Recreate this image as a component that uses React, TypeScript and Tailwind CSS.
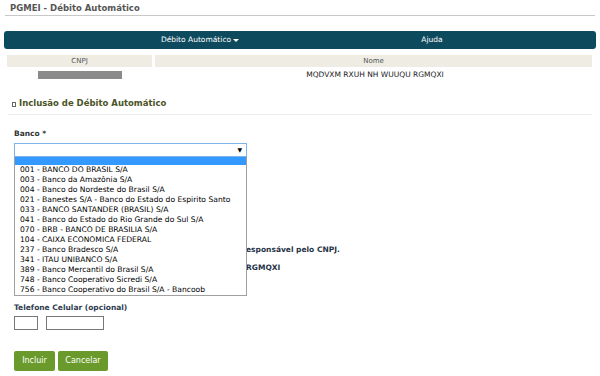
const bancos = [
  "001 - BANCO DO BRASIL S/A",
  "003 - Banco da Amazônia S/A",
  "004 - Banco do Nordeste do Brasil S/A",
  "021 - Banestes S/A - Banco do Estado do Espirito Santo",
  "033 - BANCO SANTANDER (BRASIL) S/A",
  "041 - Banco do Estado do Rio Grande do Sul S/A",
  "070 - BRB - BANCO DE BRASILIA S/A",
  "104 - CAIXA ECONOMICA FEDERAL",
  "237 - Banco Bradesco S/A",
  "341 - ITAU UNIBANCO S/A",
  "389 - Banco Mercantil do Brasil S/A",
  "748 - Banco Cooperativo Sicredi S/A",
  "756 - Banco Cooperativo do Brasil S/A - Bancoob",
];

export default function App() {
  return (
    <div className="relative w-[600px] h-[376px] overflow-hidden bg-white font-['DejaVu_Sans',Verdana,sans-serif] text-[#333]">
      {/* header */}
      <div className="mx-[5px] border-b border-[#c8c8c8] px-[5px] pt-[3px] pb-[1px]">
        <h1 className="text-[8.5px] font-bold text-[#555] leading-[11px]">PGMEI - Débito Automático</h1>
      </div>

      {/* menu */}
      <nav className="mx-[4px] mt-[15px] flex h-[18px] items-center rounded-[3px] bg-[#0e4a5e] text-[7.5px] text-white">
        <div className="flex w-[392px] items-center justify-center">
          Débito Automático
          <span className="ml-[2px] mt-[1px] h-0 w-0 border-x-[3px] border-t-[3px] border-x-transparent border-t-white" />
        </div>
        <div className="w-[72px] text-center">Ajuda</div>
      </nav>

      {/* identificacao */}
      <div className="mx-[7px] mt-[6px] grid grid-cols-[145px_437px] gap-x-[3px] text-[7px] text-[#555]">
        <div className="flex h-[12px] items-center justify-center bg-[#efede3]">CNPJ</div>
        <div className="flex h-[12px] items-center justify-center bg-[#efede3]">Nome</div>
        <div className="flex h-[16px] items-center justify-center">
          <div className="h-[8px] w-[84px] bg-[#8a8a8a]" />
        </div>
        <div className="flex h-[16px] items-center justify-center pl-[3px] text-[7.5px] text-[#222]">MQDVXM RXUH NH WUUQU RGMQXI</div>
      </div>

      {/* form */}
      <div className="mx-[8px] mt-[14px] flex items-center border-b border-[#ececec] pb-[4px]">
        <span className="ml-[4px] mr-[3px] mt-[2px] h-[5px] w-[4px] border border-[#666]" />
        <h2 className="text-[8.5px] font-bold text-[#4a5326]">Inclusão de Débito Automático</h2>
      </div>

      <div className="px-[14px] pt-[14px]">
        <label className="block text-[7.5px] font-bold leading-[10px] text-[#333]">Banco *</label>
        <div className="relative mt-[4px] w-[233px]">
          <div className="flex h-[14px] items-center justify-end border border-[#7eb4ea] pr-[4px] text-[6px] text-black">▼</div>

          {/* lista aberta */}
          <ul className="absolute left-0 top-[14px] z-10 w-[233px] border border-t-0 border-[#a0a0a0] bg-white text-[7.6px] leading-[10px] text-black">
            <li className="h-[8px] bg-[#3399ff]" />
            {bancos.map((b) => (
              <li key={b} className="whitespace-nowrap pl-[5px]">{b}</li>
            ))}
          </ul>
        </div>

        {/* conteudo coberto pela lista */}
        <div className="h-[146px] pl-[232px] pt-[88px] text-[7.5px] font-bold text-[#1f3347]">
          <p className="whitespace-nowrap leading-[10px]">esponsável pelo CNPJ.</p>
          <p className="mt-[8px] whitespace-nowrap leading-[10px]">RGMQXI</p>
        </div>

        <label className="block text-[7.5px] font-bold leading-[10px] text-[#2e3b4e]">Telefone Celular (opcional)</label>
        <div className="mt-[3px] flex gap-[8px]">
          <input className="h-[14px] w-[24px] border border-[#777]" />
          <input className="h-[14px] w-[58px] border border-[#777]" />
        </div>

        <div className="mt-[21px] flex gap-[3px]">
          <button className="h-[20px] w-[41px] rounded-[2px] bg-[#6a9a2b] text-[8px] text-white">Incluir</button>
          <button className="h-[20px] w-[50px] rounded-[2px] bg-[#6a9a2b] text-[8px] text-white">Cancelar</button>
        </div>
      </div>
    </div>
  );
}
